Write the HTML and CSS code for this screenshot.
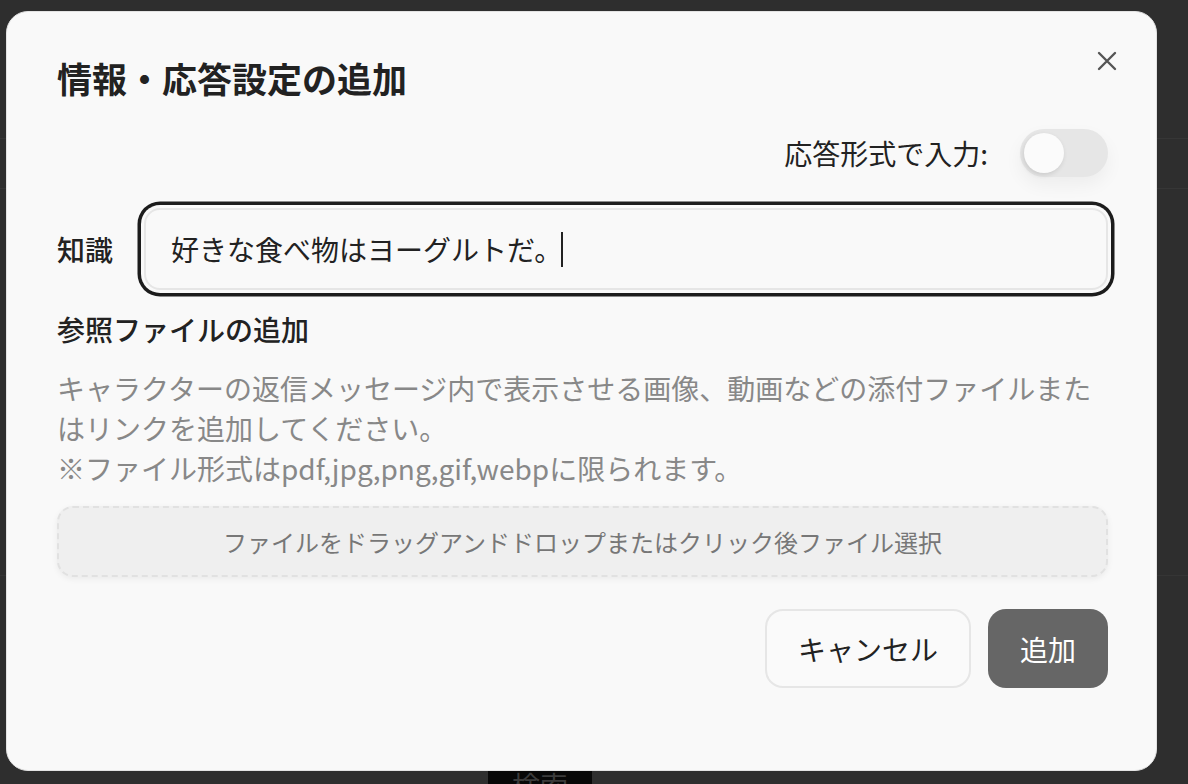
FILE: index.html
```html
<!DOCTYPE html>
<html lang="ja">
<head>
<meta charset="utf-8">
<title>情報・応答設定の追加</title>
<link rel="stylesheet" href="styles.css">
</head>
<body>
<div class="page">
  <div class="band"></div>
  <div class="band2"></div>
  <div class="search-btn">検索</div>
</div>

<div class="modal" role="dialog">
  <button class="close" aria-label="閉じる">
    <svg width="24" height="24" viewBox="0 0 24 24"><path d="M4 4 L20 20 M20 4 L4 20" stroke="#555" stroke-width="2.4" stroke-linecap="round" fill="none"/></svg>
  </button>
  <h2 class="title">情報・応答設定の追加</h2>

  <div class="toggle-row">
    <span class="toggle-label">応答形式で入力:</span>
    <span class="toggle"><span class="knob"></span></span>
  </div>

  <div class="field-row">
    <span class="field-label">知識</span>
    <div class="input"><span class="input-text">好きな食べ物はヨーグルトだ。</span><span class="caret"></span></div>
  </div>

  <h3 class="section-title">参照ファイルの追加</h3>
  <p class="desc">キャラクターの返信メッセージ内で表示させる画像、動画などの添付ファイルまたはリンクを追加してください。<br>※ファイル形式はpdf,jpg,png,gif,webpに限られます。</p>

  <div class="dropzone">ファイルをドラッグアンドドロップまたはクリック後ファイル選択</div>

  <div class="actions">
    <button class="btn btn-cancel">キャンセル</button>
    <button class="btn btn-add">追加</button>
  </div>
</div>
</body>
</html>
```

FILE: styles.css
```css
html, body {
  margin: 0;
  padding: 0;
}
body {
  background: #2e2e2e;
  width: 1188px;
  height: 784px;
  overflow: hidden;
  font-family: "Noto Sans CJK JP", "Noto Sans", sans-serif;
}
.page {
  height: 784px;
  overflow: hidden;
}
.band {
  margin-top: 138px;
  height: 49px;
  border-top: 1px solid #363636;
  border-bottom: 1px solid #363636;
}
.band2 {
  margin-top: 386px;
  border-top: 1px solid #353535;
}
.search-btn {
  margin-top: 193px;
  margin-left: 488px;
  width: 104px;
  height: 50px;
  background: #070707;
  color: #3b3b3b;
  font-size: 28px;
  line-height: 28px;
  text-align: center;
  padding-top: 2px;
  box-sizing: border-box;
}

.modal {
  position: fixed;
  left: 6px;
  top: 11px;
  width: 1151px;
  height: 760px;
  box-sizing: border-box;
  background: #f9f9f9;
  border: 1px solid #e3e3e3;
  border-radius: 22px;
  padding: 45px 48px 0 50px;
  display: flex;
  flex-direction: column;
}
.close {
  position: absolute;
  right: 37px;
  top: 37px;
  width: 24px;
  height: 24px;
  padding: 0;
  border: none;
  background: none;
  display: flex;
}
.title {
  margin: 0;
  font-size: 35px;
  line-height: 42px;
  font-weight: 600;
  color: #222;
}
.toggle-row {
  margin-top: 30px;
  display: flex;
  justify-content: flex-end;
  align-items: center;
  gap: 32px;
}
.toggle-label {
  font-size: 28px;
  line-height: 40px;
  color: #222;
}
.toggle {
  width: 88px;
  height: 48px;
  border-radius: 24px;
  background: #e6e6e6;
  box-shadow: 0 8px 18px rgba(0, 0, 0, 0.05);
  box-sizing: border-box;
  padding: 4px;
  display: flex;
  align-items: center;
}
.knob {
  width: 40px;
  height: 40px;
  border-radius: 50%;
  background: #fbfbfb;
  box-shadow: -1px 2px 5px rgba(0, 0, 0, 0.12);
}
.field-row {
  margin-top: 31px;
  display: flex;
  align-items: center;
  gap: 31px;
}
.field-label {
  font-size: 28px;
  line-height: 40px;
  font-weight: 500;
  color: #222;
}
.input {
  flex: 1;
  height: 82px;
  box-sizing: border-box;
  border: 2px solid #e6e6e6;
  border-radius: 16px;
  background: #f9f9f9;
  box-shadow: 0 0 0 3px #f9f9f9, 0 0 0 6.5px #1c1c1c;
  padding-left: 25px;
  display: flex;
  align-items: center;
}
.input-text {
  font-size: 28px;
  line-height: 40px;
  color: #222;
}
.caret {
  display: inline-block;
  width: 2px;
  height: 35px;
  background: #222;
  margin-left: -1px;
}
.section-title {
  margin: 19px 0 0;
  font-size: 28px;
  line-height: 40px;
  font-weight: 500;
  color: #222;
}
.desc {
  margin: 19px 0 0;
  font-size: 28px;
  line-height: 40px;
  color: #888;
}
.dropzone {
  margin-top: 18px;
  height: 71px;
  box-sizing: border-box;
  border: 2px dashed #e1e1e1;
  border-radius: 16px;
  background: #efefef;
  box-shadow: 0 2px 6px rgba(0, 0, 0, 0.06);
  display: flex;
  align-items: center;
  justify-content: center;
  font-size: 24px;
  color: #777;
}
.actions {
  margin-top: 32px;
  display: flex;
  justify-content: flex-end;
  gap: 17px;
}
.btn {
  height: 79px;
  border-radius: 18px;
  font-family: "Noto Sans CJK JP", "Noto Sans", sans-serif;
  font-size: 28px;
  box-sizing: border-box;
  padding: 0;
}
.btn-cancel {
  width: 206px;
  background: #fafafa;
  border: 2px solid #e6e6e6;
  color: #222;
}
.btn-add {
  width: 120px;
  background: #666;
  border: none;
  color: #fff;
}
```
